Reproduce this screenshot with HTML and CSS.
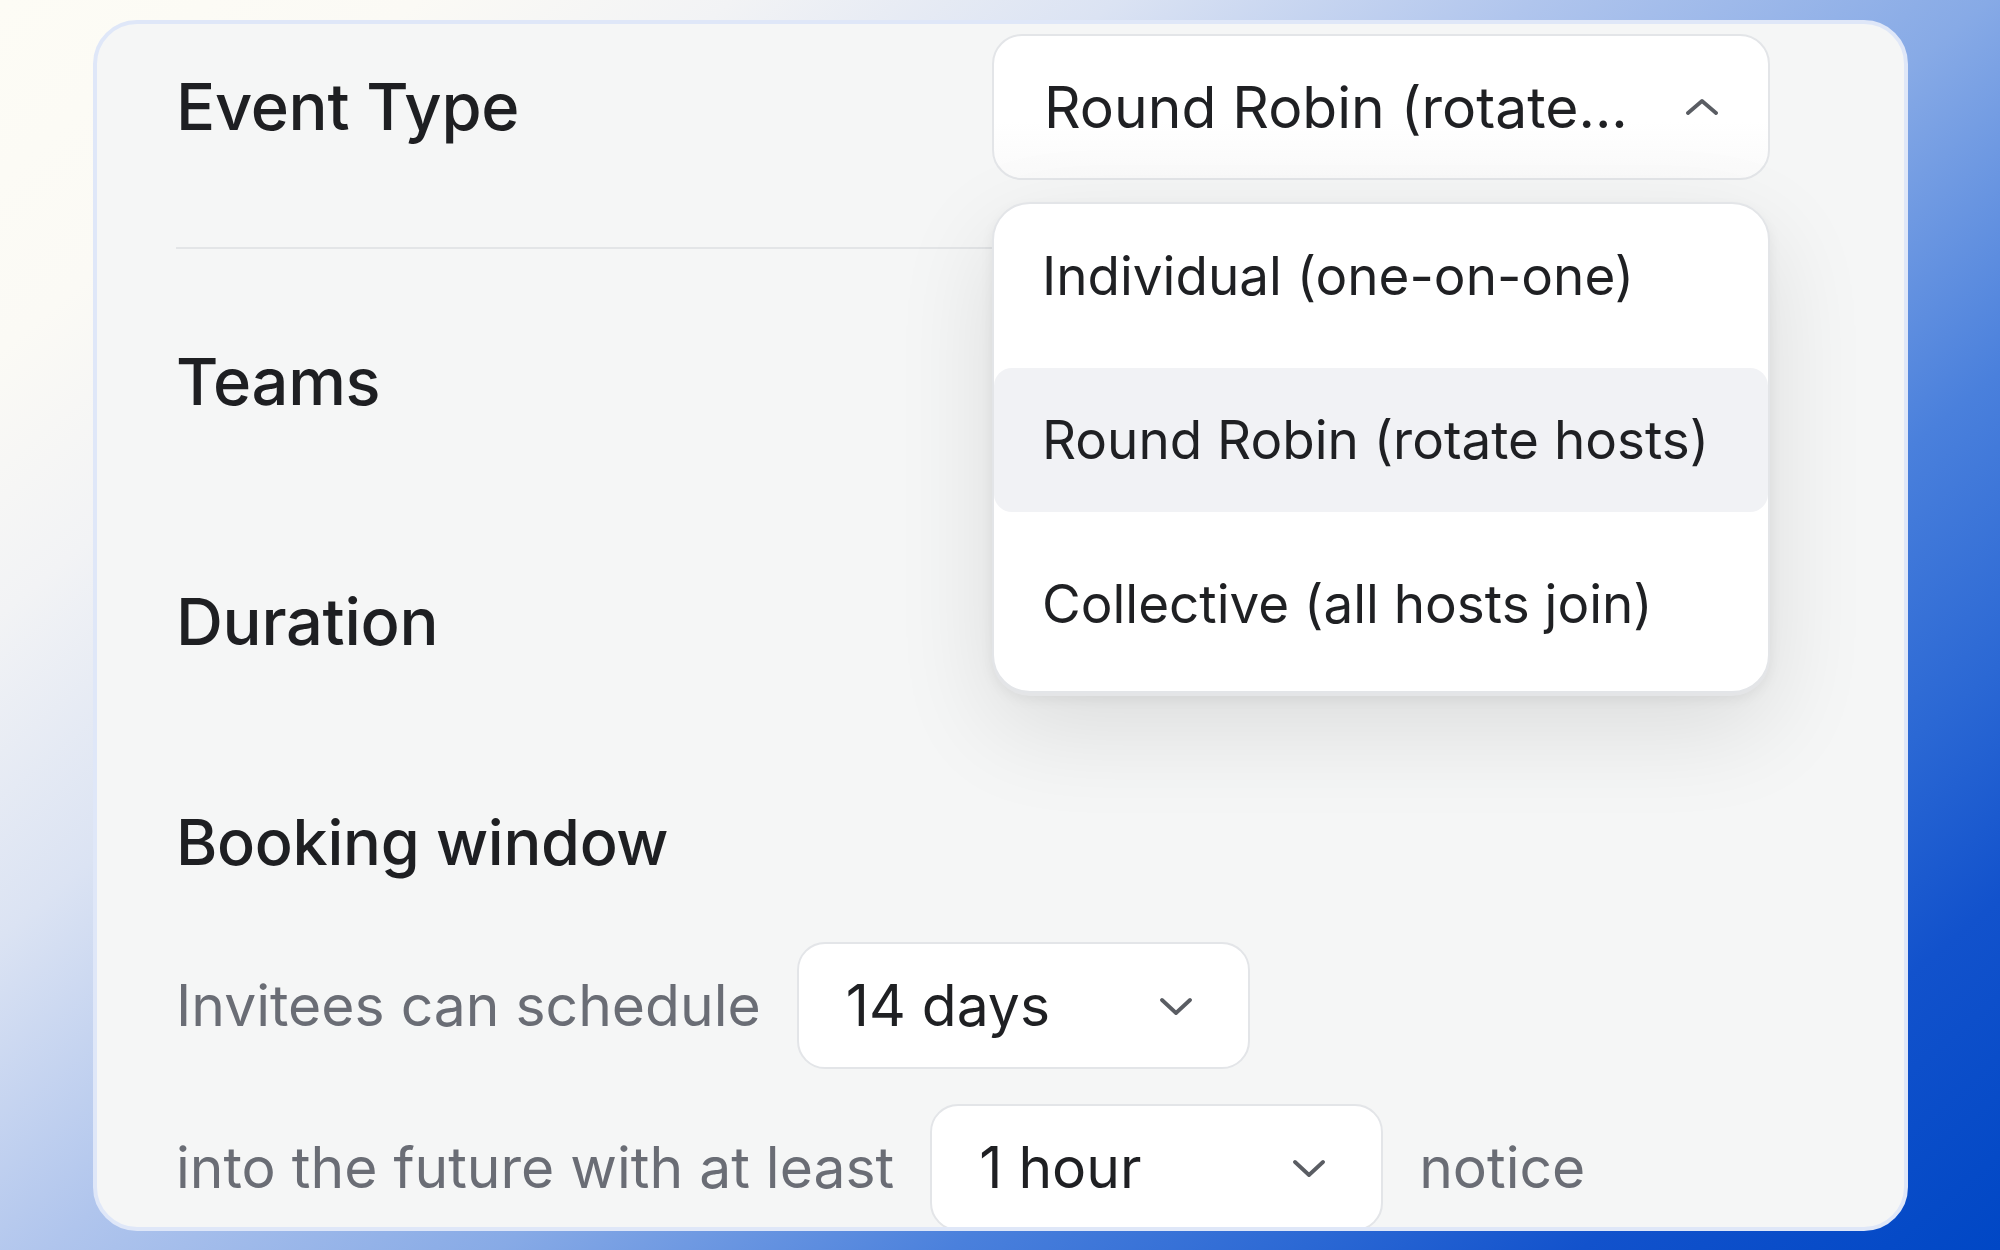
FILE: index.html
```html
<!DOCTYPE html>
<html lang="en">
<head>
<meta charset="utf-8">
<title>Event settings</title>
<link rel="stylesheet" href="styles.css">
</head>
<body>
<div class="card">
  <div class="row-top">
    <h2 class="heading">Event Type</h2>
    <div class="select-wrap">
      <div class="select select-lg">
        <span class="select-text">Round Robin (rotate...</span>
        <svg class="chev" viewBox="0 0 32 16" width="32" height="16"><path d="M2 14 L16 2 L30 14"/></svg>
      </div>
      <div class="menu">
        <div class="menu-item">Individual (one-on-one)</div>
        <div class="menu-item active">Round Robin (rotate hosts)</div>
        <div class="menu-item">Collective (all hosts join)</div>
      </div>
    </div>
  </div>
  <div class="divider"></div>
  <h2 class="heading sec-teams">Teams</h2>
  <h2 class="heading sec-duration">Duration</h2>
  <h2 class="heading heading-sm sec-booking">Booking window</h2>
  <div class="line line-1">
    <span class="muted">Invitees can schedule</span>
    <div class="select select-sm">
      <span class="select-text">14 days</span>
      <svg class="chev" viewBox="0 0 32 18" width="32" height="18"><path d="M2 3 L16 16 L30 3"/></svg>
    </div>
  </div>
  <div class="line line-2">
    <span class="muted">into the future with at least</span>
    <div class="select select-sm">
      <span class="select-text">1 hour</span>
      <svg class="chev" viewBox="0 0 32 18" width="32" height="18"><path d="M2 3 L16 16 L30 3"/></svg>
    </div>
    <span class="muted">notice</span>
  </div>
</div>
</body>
</html>
```

FILE: styles.css
```css
* { box-sizing: border-box; }
html, body { margin: 0; padding: 0; }
body {
  width: 2000px;
  height: 1250px;
  overflow: hidden;
  font-family: Inter, "Noto Sans", "Liberation Sans", sans-serif;
  background: linear-gradient(140deg,
    #fdfcf5 0%, #fbfaf5 12%, #f2f3f5 21%, #dbe3f3 32%, #b0c5ed 44%,
    #87aae6 57%, #4a80dc 70%, #2b68d4 80%, #1252cc 88%, #0047c5 100%);
  padding: 20px 0 0 93px;
}
.card {
  width: 1815px;
  height: 1211px;
  background: #f5f6f6;
  border: 4px solid #dfe7f8;
  border-radius: 44px;
  padding: 10px 134px 0 79px;
  overflow: hidden;
}
.heading {
  margin: 0;
  font-size: 65px;
  font-weight: 500;
  line-height: 80px;
  color: #1e1f22;
  letter-spacing: -0.3px;
}
.heading-sm { font-size: 63px; }
.row-top {
  display: flex;
  justify-content: space-between;
  align-items: center;
  height: 146px;
}
.select-wrap {
  position: relative;
  width: 778px;
}
.select {
  display: flex;
  align-items: center;
  justify-content: space-between;
  background: #ffffff;
  border: 2px solid #e3e5e8;
  color: #1f2023;
  font-weight: 400;
}
.select-lg {
  height: 146px;
  border-radius: 30px;
  padding: 0 50px 0 50px;
  font-size: 57px;
  background: linear-gradient(#ffffff 60%, #fafafa);
}
.select-text {
  white-space: nowrap;
}
.chev {
  flex: none;
  fill: none;
  stroke: #5a5d63;
  stroke-width: 3.8;
  stroke-linecap: round;
  stroke-linejoin: round;
}
.menu {
  position: absolute;
  left: 0;
  top: calc(100% + 22px);
  width: 100%;
  background: #ffffff;
  border: 2px solid #e3e5e8;
  border-radius: 38px;
  padding: 0 0 15px;
  display: flex;
  flex-direction: column;
  gap: 20px;
  box-shadow: 0 3px 0 #e4e5e7, 0 6px 14px rgba(0,0,0,0.06), 0 34px 100px rgba(0,0,0,0.11);
  z-index: 5;
}
.menu-item {
  height: 144px;
  display: flex;
  align-items: center;
  padding-left: 48px;
  font-size: 53px;
  color: #1f2023;
  border-radius: 18px;
}
.menu-item.active { background: #f1f2f5; }
.divider {
  margin-top: 67px;
  height: 2px;
  background: #e3e5e7;
}
.sec-teams { margin-top: 93px; }
.sec-duration { margin-top: 160px; }
.sec-booking { margin-top: 140px; }
.line {
  display: flex;
  align-items: center;
  gap: 36px;
  height: 127px;
}
.line-1 { margin-top: 60px; }
.line-2 { margin-top: 35px; }
.muted {
  font-size: 57px;
  color: #6a6d75;
  white-space: nowrap;
}
.select-sm {
  width: 453px;
  height: 127px;
  flex: none;
  border-radius: 28px;
  padding: 0 56px 0 47px;
  font-size: 57px;
}
```
